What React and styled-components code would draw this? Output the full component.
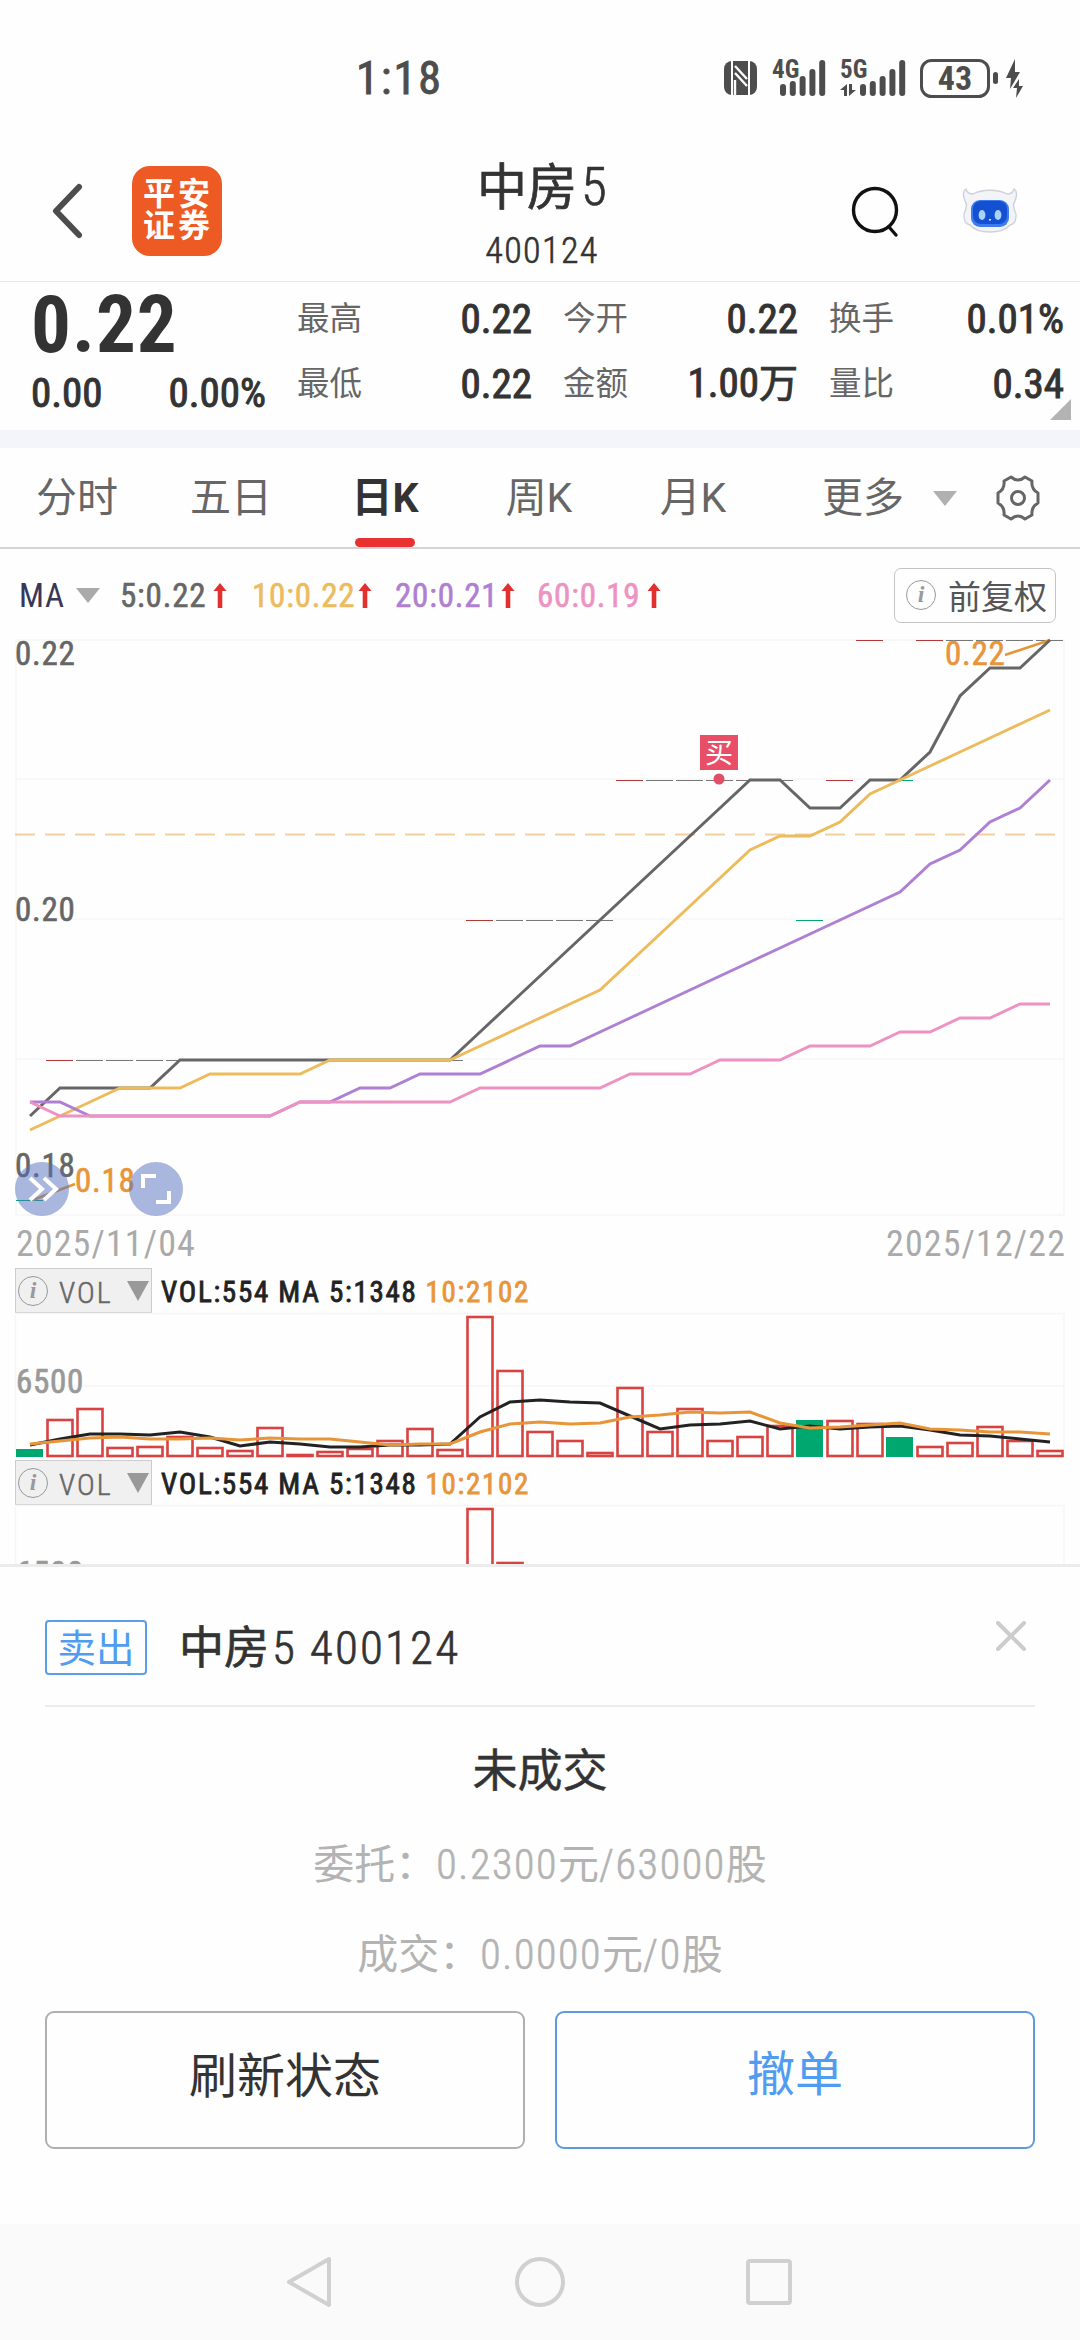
import styled, { createGlobalStyle } from "styled-components";

const GlobalStyle = createGlobalStyle`
  * {
    box-sizing: border-box;
  }
  body {
    margin: 0;
    background: #fefefe;
    color: #333;
    font-family: "Roboto Condensed", Roboto, "Noto Sans CJK SC", sans-serif;
  }
`;

const Screen = styled.div`
  width: 1080px;
  height: 2340px;
  display: flex;
  flex-direction: column;
  overflow: hidden;
  background: #fefefe;
`;

const StatusBar = styled.div`
  height: 140px;
  flex: none;
  display: flex;
  align-items: center;
  padding: 16px 56px 0 356px;
`;

const Clock = styled.div`
  flex: 1;
  font-size: 46px;
  letter-spacing: 2px;
  -webkit-text-stroke: 0.9px #4d4d4d;
  color: #4d4d4d;
`;

const StatusIcons = styled.svg`
  width: 302px;
  height: 44px;
  display: block;
  fill: #4d4d4d;
`;

const Header = styled.div`
  height: 142px;
  flex: none;
  display: flex;
  align-items: center;
  padding: 0 62px 0 50px;
  border-bottom: 1px solid #e8e8e8;
`;

const HeaderSide = styled.div`
  width: ${(props) => (props.$end ? 314 : 330)}px;
  display: flex;
  align-items: center;
  justify-content: ${(props) => (props.$end ? "flex-end" : "flex-start")};
`;

const BackIcon = styled.svg`
  width: 34px;
  height: 60px;
  margin-right: 48px;
`;

const Logo = styled.div`
  width: 90px;
  height: 90px;
  padding: 0 0 1px 2px;
  border-radius: 18px;
  background: #ee5a24;
  color: #fff;
  display: flex;
  align-items: center;
  justify-content: center;
  text-align: center;
  font-size: 32px;
  font-weight: 700;
  line-height: 32px;
  letter-spacing: 3px;
`;

const Title = styled.div`
  flex: 1;
  text-align: center;
  h1 {
    margin: 8px 0 0;
    font-size: 50px;
    font-weight: 400;
    line-height: 60px;
    -webkit-text-stroke: 0.7px #333;
  }
  p {
    margin: 11px 0 0;
    font-size: 36px;
    font-weight: 300;
    line-height: 44px;
    letter-spacing: 1.4px;
    -webkit-text-stroke: 0.6px #333;
  }
`;

const Quote = styled.div`
  height: 148px;
  flex: none;
  display: flex;
  position: relative;
`;

const Price = styled.div`
  width: 297px;
  padding-left: 31px;
  strong {
    display: block;
    margin-top: 5px;
    font-size: 79px;
    font-weight: 700;
    letter-spacing: 1px;
    line-height: 76px;
  }
`;

const Change = styled.div`
  display: flex;
  justify-content: space-between;
  padding-right: 31px;
  margin-top: 6px;
  font-size: 41px;
  -webkit-text-stroke: 1px #333;
  line-height: 48px;
`;

const Stats = styled.div`
  display: grid;
  grid-template-columns: repeat(3, 235px);
  grid-template-rows: 65px 65px;
  column-gap: 31px;
  padding-top: 4px;
`;

const Stat = styled.div`
  display: flex;
  align-items: center;
  justify-content: space-between;
  font-size: 41px;
  -webkit-text-stroke: 1px #333;
  line-height: 48px;
  span {
    font-size: 32.5px;
    -webkit-text-stroke: 0;
    color: #666;
  }
  em {
    font-style: normal;
    font-size: 39px;
  }
`;

const Corner = styled.div`
  position: absolute;
  right: 9px;
  bottom: 10px;
  border-left: 21px solid transparent;
  border-bottom: 21px solid #b3b3b3;
`;

const Band = styled.div`
  height: 18px;
  flex: none;
  background: #f3f5fa;
`;

const Tabs = styled.div`
  height: 101px;
  flex: none;
  display: flex;
  border-bottom: 2px solid #d4d4d4;
`;

const Tab = styled.div`
  width: 154px;
  display: flex;
  flex-direction: column;
  align-items: center;
  padding-top: 10px;
  font-family: Roboto, "Noto Sans CJK SC", sans-serif;
  font-size: 41px;
  line-height: 80px;
  height: 99px;
  font-weight: ${(props) => (props.$active ? 700 : 400)};
  color: ${(props) => (props.$active ? "#333" : "#666")};
  &::after {
    content: "";
    width: 60px;
    height: 9px;
    border-radius: 5px;
    background: ${(props) => (props.$active ? "#e83232" : "transparent")};
  }
`;

const More = styled.div`
  flex: 1;
  display: flex;
  align-items: center;
  padding: 0 40px 0 52px;
  font-size: 41px;
  line-height: 80px;
  height: 100px;
  color: #666;
`;

const Caret = styled.i`
  flex: none;
  border: ${(props) => props.$w / 2}px solid transparent;
  border-top: ${(props) => props.$h}px solid ${(props) => props.$color};
  border-bottom: 0;
`;

const MoreCaret = styled(Caret)`
  margin: 0 auto 0 29px;
`;

const MaRow = styled.div`
  height: 90px;
  flex: none;
  display: flex;
  align-items: center;
  padding: 2px 24px 0 19px;
  font-size: 33px;
  letter-spacing: 0.8px;
`;

const MaName = styled.div`
  width: 101px;
  display: flex;
  align-items: center;
  gap: 11px;
  color: #3a3658;
`;

const MaItem = styled.div`
  width: ${(props) => props.$w}px;
  display: flex;
  align-items: center;
  gap: ${(props) => props.$gap}px;
  -webkit-text-stroke: 0.6px ${(props) => props.$color};
  color: ${(props) => props.$color};
`;

const AdjustButton = styled.div`
  width: 162px;
  height: 55px;
  margin-left: auto;
  display: flex;
  align-items: center;
  gap: 12px;
  padding-left: 11px;
  border: 1px solid #c4c4c4;
  border-radius: 7px;
  font-size: 33px;
  letter-spacing: 0;
  color: #555;
`;

const Info = styled.span`
  flex: none;
  width: 30px;
  height: 30px;
  border: 1.5px solid #999;
  border-radius: 50%;
  font: italic 700 24px/26px "Liberation Serif", serif;
  letter-spacing: 0;
  text-align: center;
  color: #999;
`;

const ChartBox = styled.svg`
  display: block;
  flex: none;
  width: 1080px;
  height: ${(props) => props.$h}px;
  overflow: visible;
`;

const Dates = styled.div`
  height: 52px;
  flex: none;
  display: flex;
  align-items: center;
  justify-content: space-between;
  padding: 4px 14px 0 16px;
  font-size: 36px;
  letter-spacing: 1.1px;
  color: #aaa;
`;

const Charts = styled.div`
  height: 1015px;
  flex: none;
  display: flex;
  flex-direction: column;
  overflow: hidden;
`;

const VolHead = styled.div`
  height: 45px;
  flex: none;
  display: flex;
  align-items: center;
  padding-left: 15px;
  font-size: 29px;
  letter-spacing: 1.7px;
  color: #222;
`;

const VolText = styled.span`
  margin: 3px 8px 0 0;
  color: ${(props) => props.$color};
  -webkit-text-stroke: 0.8px ${(props) => props.$color};
`;

const VolSelect = styled.div`
  width: 137px;
  height: 45px;
  margin-right: 9px;
  display: flex;
  align-items: center;
  padding: 0 2px;
  border: 1px solid #ccc;
  background: #f0f0f0;
  color: #666;
  span:nth-child(2) {
    flex: 1;
    padding: 3px 0 0 11px;
    font-size: 30px;
    font-weight: 300;
    letter-spacing: 2px;
    -webkit-text-stroke: 0.5px #666;
  }
`;

const Sheet = styled.div`
  height: 660px;
  flex: none;
  padding: 0 45px;
  border-top: 3px solid #ececec;
  text-align: center;
`;

const SheetHead = styled.div`
  height: 140px;
  display: flex;
  align-items: center;
  border-bottom: 2px solid #ececec;
`;

const Badge = styled.div`
  width: 102px;
  height: 55px;
  margin: 23px 32px 0 0;
  border: 2px solid #5b9fe8;
  border-radius: 4px;
  font-size: 38.5px;
  line-height: 53px;
  color: #4f9cf0;
`;

const SheetName = styled.div`
  flex: 1;
  margin-top: 25px;
  text-align: left;
  font-size: 45px;
  line-height: 60px;
  -webkit-text-stroke: 0.7px #333;
`;

const Digits = styled.span`
  margin-left: ${(props) => props.$left || 0}px;
  font-size: ${(props) => props.$size}px;
  letter-spacing: ${(props) => props.$gap || 0}px;
  font-weight: 300;
`;

const CloseIcon = styled.svg`
  width: 30px;
  height: 30px;
  margin-right: 9px;
`;

const Result = styled.div`
  margin-top: 35px;
  font-size: 45px;
  line-height: 60px;
  -webkit-text-stroke: 0.5px #333;
`;

const Detail = styled.div`
  margin-top: ${(props) => props.$top}px;
  font-size: 41px;
  line-height: 60px;
  color: #b3b3b3;
  ${Digits} {
    -webkit-text-stroke: 0.6px #b3b3b3;
  }
`;

const Actions = styled.div`
  display: flex;
  gap: 30px;
  margin-top: 26px;
`;

const Action = styled.div`
  flex: 1;
  height: 138px;
  border: 2px solid ${(props) => (props.$primary ? "#5b9bdc" : "#b0b0b0")};
  border-radius: 9px;
  font-size: 48px;
  line-height: ${(props) => (props.$primary ? 123 : 128)}px;
  color: ${(props) => (props.$primary ? "#4f9cf0" : "#333")};
`;

const NavBar = styled.div`
  flex: 1;
  display: flex;
  align-items: center;
  justify-content: center;
  gap: 179px;
  background: #fafafa;
  svg {
    width: 50px;
    height: 54px;
    fill: none;
    stroke: #d0d0d0;
    stroke-width: 4;
    stroke-linejoin: round;
  }
`;

// average prices for each trading day, in thousandths
const ma5 = [
  186, 188, 188, 188, 188, 190, 190, 190, 190, 190, 190, 190, 190, 190, 190,
  192, 194, 196, 198, 200, 202, 204, 206, 208, 210, 210, 208, 208, 210, 210,
  212, 216, 218, 218, 220,
];
const ma10 = [
  185, 186, 187, 188, 188, 188, 189, 189, 189, 189, 190, 190, 190, 190, 190,
  191, 192, 193, 194, 195, 197, 199, 201, 203, 205, 206, 206, 207, 209, 210,
  211, 212, 213, 214, 215,
];
const ma20 = [
  187, 187, 186, 186, 186, 186, 186, 186, 186, 187, 187, 188, 188, 189, 189,
  189, 190, 191, 191, 192, 193, 194, 195, 196, 197, 198, 199, 200, 201, 202,
  204, 205, 207, 208, 210,
];
const ma60 = [
  187, 186, 186, 186, 186, 186, 186, 186, 186, 187, 187, 187, 187, 187, 187,
  188, 188, 188, 188, 188, 189, 189, 189, 190, 190, 190, 191, 191, 191, 192,
  192, 193, 193, 194, 194,
];
const closes = [
  180, 190, 190, 190, 190, 190, 190, 190, 190, 190, 190, 190, 190, 190, 190,
  200, 200, 200, 200, 200, 210, 210, 210, 210, 210, 210, 200, 210, 220, 210,
  220, 220, 220, 220, 220,
];

// heights in px above the base line of the volume chart
const volumes = [
  8, 38, 49, 10, 11, 21, 10, 7, 30, 3, 6, 9, 17, 29, 8, 141, 87, 26, 17, 5, 70,
  26, 49, 17, 21, 32, 37, 37, 34, 20, 11, 15, 31, 17, 7,
];
const vol5 = [
  12, 18, 23, 23, 22, 25, 20, 11, 15, 13, 10, 10, 12, 12, 13, 40, 55, 57, 55,
  54, 41, 28, 32, 33, 36, 28, 31, 28, 30, 31, 27, 22, 21, 18, 15,
];
const vol10 = [
  13, 16, 19, 20, 18, 18, 19, 17, 19, 18, 18, 15, 12, 13, 13, 25, 33, 35, 33,
  34, 40, 42, 45, 44, 45, 34, 29, 30, 32, 34, 28, 27, 25, 25, 23,
];

const xOf = (i) => 30 + i * 30;
const priceY = (v) => 1 + (220 - v) * 14;
const toPoints = (list, y) => list.map((v, i) => `${xOf(i)},${y(v)}`).join(" ");

const dayColor = (i) => {
  if (i === 0 || closes[i] < closes[i - 1]) return "#00a870";
  return closes[i] > closes[i - 1] ? "#b03a3a" : "#777";
};

const UpArrow = () => (
  <svg width="14" height="25" viewBox="0 0 13 25">
    <path d="M6.5 0 13 8H8.8V25H4.2V8H0Z" fill="#e2302f" />
  </svg>
);

const Signal = ({ x }) => (
  <>
    {[12, 15, 20, 27, 36].map((h, i) => (
      <rect key={i} x={x + i * 9.8} y={40 - h} width="6" height={h} rx="3" />
    ))}
  </>
);

const PriceChart = () => (
  <ChartBox $h={577} viewBox="0 0 1080 577">
    <g stroke="#f8f8f8" strokeWidth="2" fill="none">
      <rect x="16" y="1" width="1048" height="575" />
      <path d="M16 140H1064M16 280H1064M16 420H1064" />
    </g>
    <path
      d="M15 195.5H1056"
      stroke="#f3d09b"
      strokeWidth="2"
      strokeDasharray="20 10"
    />
    {closes.map((v, i) => (
      <rect
        key={i}
        x={xOf(i) - 14}
        y={priceY(v)}
        width="27"
        height="1"
        fill={dayColor(i)}
      />
    ))}
    <g fontSize="33" fill="#666" stroke="#666" strokeWidth="0.6" letterSpacing="0.7">
      <text x="15" y="26">0.22</text>
      <text x="15" y="282">0.20</text>
      <text x="15" y="538">0.18</text>
      <g fill="#e8953a" stroke="#e8953a">
        <text x="945" y="26">0.22</text>
        <text x="75" y="553">0.18</text>
      </g>
    </g>
    <path
      d="M1005 16 1050 1M75 545 33 561"
      stroke="#e8953a"
      strokeWidth="2.5"
    />
    <g fill="none" strokeWidth="3">
      <polyline points={toPoints(ma5, priceY)} stroke="#666" />
      <polyline points={toPoints(ma10, priceY)} stroke="#edbb5c" />
      <polyline points={toPoints(ma20, priceY)} stroke="#ae7fd2" />
      <polyline points={toPoints(ma60, priceY)} stroke="#ee92c2" />
    </g>
    <rect x="700" y="96" width="38" height="35" fill="#e84f66" />
    <text x="719" y="124" fontSize="28" textAnchor="middle" fill="#fff">
      买
    </text>
    <circle cx="719" cy="140" r="5.5" fill="#e04f66" />
    <g fill="#5470be" fillOpacity="0.5">
      <circle cx="42" cy="550" r="27" />
      <circle cx="156" cy="550" r="27" />
    </g>
    <path
      d="M30 539 42 550 30 561M44 539 56 550 44 561M143 549V537H156M169 552V563H156"
      fill="none"
      stroke="#fff"
      strokeWidth="4"
    />
  </ChartBox>
);

const VolumePanel = () => (
  <>
    <VolHead>
      <VolSelect>
        <Info>i</Info>
        <span>VOL</span>
        <Caret $w={22} $h={20} $color="#999" />
      </VolSelect>
      <VolText $color="#222">VOL:554 MA 5:1348</VolText>
      <VolText $color="#e8953a">10:2102</VolText>
    </VolHead>
    <ChartBox $h={147} viewBox="0 0 1080 147">
      <path
        d="M15.5 144V.5H1064V144M16 73H1064"
        stroke="#f6f6f6"
        strokeWidth="1.5"
        fill="none"
      />
      <text x="16" y="80" fontSize="33" fill="#999" stroke="#999" strokeWidth="0.7" letterSpacing="0.7">
        6500
      </text>
      {volumes.map((v, i) => {
        const down = dayColor(i) === "#00a870";
        return down ? (
          <rect key={i} x={xOf(i) - 14} y={144 - v} width="27" height={v} fill="#00a870" />
        ) : (
          <rect
            key={i}
            x={xOf(i) - 12.5}
            y={145 - v}
            width="25"
            height={v - 2}
            fill="none"
            stroke="#d84341"
            strokeWidth="2.6"
          />
        );
      })}
      <g fill="none" strokeWidth="3">
        <polyline points={toPoints(vol5, (v) => 144 - v)} stroke="#222" />
        <polyline points={toPoints(vol10, (v) => 144 - v)} stroke="#e8953a" />
      </g>
    </ChartBox>
  </>
);

export default function App() {
  return (
    <>
      <GlobalStyle />
      <Screen>
        <StatusBar>
          <Clock>1:18</Clock>
          <StatusIcons viewBox="0 0 302 44">
            <rect x="2" y="5" width="33" height="34" rx="8" />
            <path
              d="M10 5V39M27 5V39"
              stroke="#fefefe"
              strokeWidth="2"
            />
            <path
              d="M13 10 25 23M13 17 25 30M13 24V39"
              stroke="#fefefe"
              strokeWidth="2.4"
            />
            <text x="50" y="22" fontSize="25" fontWeight="700">4G</text>
            <Signal x={58} />
            <text x="118" y="22" fontSize="25" fontWeight="700">5G</text>
            <path d="M118 34 125 28V40H122V34ZM127 28H130V34H134L127 40Z" />
            <Signal x={138} />
            <rect x="199.5" y="4.5" width="67" height="36" rx="10" fill="none" stroke="#4d4d4d" strokeWidth="3" />
            <text x="233" y="34" fontSize="34" fontWeight="700" textAnchor="middle">43</text>
            <rect x="271" y="16" width="5" height="12" rx="2.5" />
            <path d="M293 3 284 22H289L288 33 298 16H293ZM297 23 291 32H295L294 42 301 30H297Z" />
          </StatusIcons>
        </StatusBar>

        <Header>
          <HeaderSide>
            <BackIcon viewBox="0 0 34 60" fill="none" stroke="#4d4d4d" strokeWidth="6" strokeLinecap="round" strokeLinejoin="round">
              <path d="M29 6 6 30 29 54" />
            </BackIcon>
            <Logo>
              平安
              <br />
              证券
            </Logo>
          </HeaderSide>
          <Title>
            <h1>
              中房<Digits $size={53} $left={4}>5</Digits>
            </h1>
            <p>400124</p>
          </Title>
          <HeaderSide $end>
            <svg width="50" height="54" viewBox="0 0 50 54" fill="none" stroke="#111" strokeWidth="3.4" strokeLinecap="round">
              <circle cx="25" cy="26" r="21.5" />
              <path d="M39 43 46 51" />
            </svg>
            <svg width="118" height="46" viewBox="-62 0 118 46">
              <path
                d="M3 13C1 8 1 3 4 1 5 5 8 6 11 6 20 1 36 1 45 6 48 6 51 5 52 1 55 3 55 8 53 13 50 17 52 22 54 26 54 34 52 36 48 37 43 43 36 44 28 44 20 44 13 43 8 37 4 36 2 34 2 26 4 22 6 17 3 13Z"
                fill="#f3f4f8"
                stroke="#d0d2da"
                strokeWidth="1.4"
              />
              <rect x="9" y="12" width="38" height="27" rx="9" fill="#3f7bf0" />
              <rect x="11" y="13" width="34" height="23" rx="8" fill="#1450d2" />
              <ellipse cx="20" cy="27" rx="3.4" ry="5" fill="#a9d2ff" />
              <ellipse cx="36" cy="27" rx="3.4" ry="5" fill="#a9d2ff" />
              <path d="M27.4 31.5H28.6L28 32.5Z" fill="#fff" stroke="#fff" />
            </svg>
          </HeaderSide>
        </Header>

        <Quote>
          <Price>
            <strong>0.22</strong>
            <Change>
              <span>0.00</span>
              <span>0.00%</span>
            </Change>
          </Price>
          <Stats>
            <Stat><span>最高</span>0.22</Stat>
            <Stat><span>今开</span>0.22</Stat>
            <Stat><span>换手</span>0.01%</Stat>
            <Stat><span>最低</span>0.22</Stat>
            <Stat><span>金额</span><div>1.00<em>万</em></div></Stat>
            <Stat><span>量比</span>0.34</Stat>
          </Stats>
          <Corner />
        </Quote>
        <Band />

        <Tabs>
          <Tab>分时</Tab>
          <Tab>五日</Tab>
          <Tab $active>日K</Tab>
          <Tab>周K</Tab>
          <Tab>月K</Tab>
          <More>
            更多
            <MoreCaret $w={24} $h={15} $color="#b0b0b0" />
            <svg width="44" height="46" viewBox="0 0 44 46" fill="none" stroke="#666" strokeWidth="3" strokeLinejoin="round">
              <path d="M15 2Q22 8 29 2L36 6Q35 14 42 18V28Q35 32 36 40L29 44Q22 38 15 44L8 40Q9 32 2 28V18Q9 14 8 6Z" />
              <circle cx="22" cy="23" r="6.5" />
            </svg>
          </More>
        </Tabs>

        <Charts>
          <MaRow>
            <MaName>
              MA
              <Caret $w={24} $h={15} $color="#aaa" />
            </MaName>
            <MaItem $w={132} $gap={7} $color="#666">5:0.22<UpArrow /></MaItem>
            <MaItem $w={143} $gap={3} $color="#edbb5c">10:0.22<UpArrow /></MaItem>
            <MaItem $w={142} $gap={3} $color="#ae7fd2">20:0.21<UpArrow /></MaItem>
            <MaItem $w={130} $gap={7} $color="#ee92c2">60:0.19<UpArrow /></MaItem>
            <AdjustButton>
              <Info>i</Info>
              前复权
            </AdjustButton>
          </MaRow>
          <PriceChart />
          <Dates>
            <span>2025/11/04</span>
            <span>2025/12/22</span>
          </Dates>
          <VolumePanel />
          <VolumePanel />
        </Charts>

        <Sheet>
          <SheetHead>
            <Badge>卖出</Badge>
            <SheetName>
              中房<Digits $size={47} $gap={2.2} $left={3}>5 400124</Digits>
            </SheetName>
            <CloseIcon viewBox="0 0 30 30" stroke="#ccc" strokeWidth="4" strokeLinecap="round">
              <path d="M2 2 28 28M28 2 2 28" />
            </CloseIcon>
          </SheetHead>
          <Result>未成交</Result>
          <Detail $top={33}>
            委托：<Digits $size={42} $gap={1.6}>0.2300</Digits>元
            <Digits $size={42} $gap={1.6}>/63000</Digits>股
          </Detail>
          <Detail $top={30}>
            成交：<Digits $size={42} $gap={1.6}>0.0000</Digits>元
            <Digits $size={42} $gap={1.6}>/0</Digits>股
          </Detail>
          <Actions>
            <Action>刷新状态</Action>
            <Action $primary>撤单</Action>
          </Actions>
        </Sheet>

        <NavBar>
          <svg viewBox="0 0 50 54">
            <path d="M43 4V50L3 27Z" />
          </svg>
          <svg viewBox="0 0 50 54">
            <circle cx="25" cy="27" r="23" />
          </svg>
          <svg viewBox="0 0 50 54">
            <rect x="4" y="6" width="42" height="42" rx="2" />
          </svg>
        </NavBar>
      </Screen>
    </>
  );
}
